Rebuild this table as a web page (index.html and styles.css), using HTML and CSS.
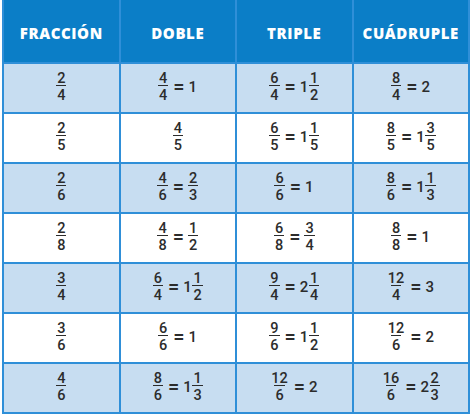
FILE: index.html
```html
<!DOCTYPE html>
<html lang="es">
<head>
<meta charset="utf-8">
<link rel="stylesheet" href="styles.css">
</head>
<body>
<div class="grid">
  <div class="th">FRACCIÓN</div>
  <div class="th">DOBLE</div>
  <div class="th">TRIPLE</div>
  <div class="th">CUÁDRUPLE</div>

  <div class="td alt"><span class="fr"><span>2</span><span>4</span></span></div>
  <div class="td alt"><span class="fr"><span>4</span><span>4</span></span><span class="eq">=</span><span class="n">1</span></div>
  <div class="td alt"><span class="fr"><span>6</span><span>4</span></span><span class="eq">=</span><span class="n">1</span><span class="fr"><span>1</span><span>2</span></span></div>
  <div class="td alt"><span class="fr"><span>8</span><span>4</span></span><span class="eq">=</span><span class="n">2</span></div>

  <div class="td"><span class="fr"><span>2</span><span>5</span></span></div>
  <div class="td"><span class="fr"><span>4</span><span>5</span></span></div>
  <div class="td"><span class="fr"><span>6</span><span>5</span></span><span class="eq">=</span><span class="n">1</span><span class="fr"><span>1</span><span>5</span></span></div>
  <div class="td"><span class="fr"><span>8</span><span>5</span></span><span class="eq">=</span><span class="n">1</span><span class="fr"><span>3</span><span>5</span></span></div>

  <div class="td alt"><span class="fr"><span>2</span><span>6</span></span></div>
  <div class="td alt"><span class="fr"><span>4</span><span>6</span></span><span class="eq">=</span><span class="fr"><span>2</span><span>3</span></span></div>
  <div class="td alt"><span class="fr"><span>6</span><span>6</span></span><span class="eq">=</span><span class="n">1</span></div>
  <div class="td alt"><span class="fr"><span>8</span><span>6</span></span><span class="eq">=</span><span class="n">1</span><span class="fr"><span>1</span><span>3</span></span></div>

  <div class="td"><span class="fr"><span>2</span><span>8</span></span></div>
  <div class="td"><span class="fr"><span>4</span><span>8</span></span><span class="eq">=</span><span class="fr"><span>1</span><span>2</span></span></div>
  <div class="td"><span class="fr"><span>6</span><span>8</span></span><span class="eq">=</span><span class="fr"><span>3</span><span>4</span></span></div>
  <div class="td"><span class="fr"><span>8</span><span>8</span></span><span class="eq">=</span><span class="n">1</span></div>

  <div class="td alt"><span class="fr"><span>3</span><span>4</span></span></div>
  <div class="td alt"><span class="fr"><span>6</span><span>4</span></span><span class="eq">=</span><span class="n">1</span><span class="fr"><span>1</span><span>2</span></span></div>
  <div class="td alt"><span class="fr"><span>9</span><span>4</span></span><span class="eq">=</span><span class="n">2</span><span class="fr"><span>1</span><span>4</span></span></div>
  <div class="td alt"><span class="fr"><span>12</span><span>4</span></span><span class="eq">=</span><span class="n">3</span></div>

  <div class="td"><span class="fr"><span>3</span><span>6</span></span></div>
  <div class="td"><span class="fr"><span>6</span><span>6</span></span><span class="eq">=</span><span class="n">1</span></div>
  <div class="td"><span class="fr"><span>9</span><span>6</span></span><span class="eq">=</span><span class="n">1</span><span class="fr"><span>1</span><span>2</span></span></div>
  <div class="td"><span class="fr"><span>12</span><span>6</span></span><span class="eq">=</span><span class="n">2</span></div>

  <div class="td alt"><span class="fr"><span>4</span><span>6</span></span></div>
  <div class="td alt"><span class="fr"><span>8</span><span>6</span></span><span class="eq">=</span><span class="n">1</span><span class="fr"><span>1</span><span>3</span></span></div>
  <div class="td alt"><span class="fr"><span>12</span><span>6</span></span><span class="eq">=</span><span class="n">2</span></div>
  <div class="td alt"><span class="fr"><span>16</span><span>6</span></span><span class="eq">=</span><span class="n">2</span><span class="fr"><span>2</span><span>3</span></span></div>
</div>
</body>
</html>
```

FILE: styles.css
```css
html, body {
  margin: 0;
  padding: 0;
  background: #ffffff;
}

.grid {
  margin-left: 2px;
  width: 468px;
  box-sizing: border-box;
  display: grid;
  grid-template-columns: repeat(4, 1fr);
  grid-template-rows: 62px repeat(7, 48px);
  gap: 2px;
  padding: 0 2px 2px 2px;
  background: #2f8fd8;
}

.th {
  background: #0b7ec7;
  color: #ffffff;
  font-family: "Open Sans", "DejaVu Sans", sans-serif;
  font-weight: 800;
  font-size: 15px;
  letter-spacing: 0.6px;
  display: flex;
  align-items: center;
  justify-content: center;
  padding-top: 3px;
}

.td {
  background: #ffffff;
  color: #2c2c2c;
  font-family: Roboto, "Liberation Sans", sans-serif;
  font-weight: 500;
  font-size: 14.5px;
  display: flex;
  align-items: center;
  justify-content: center;
  padding-bottom: 2px;
}

.td.alt {
  background: #c7ddf1;
}

.fr {
  display: inline-flex;
  flex-direction: column;
  align-items: center;
  line-height: 17px;
}

.fr span {
  display: block;
  padding: 0 1px;
}

.fr span:first-child {
  margin-bottom: -1px;
}

.fr span:last-child {
  border-top: 1.5px solid #2c2c2c;
  margin-top: -1px;
  padding-top: 1px;
}

.eq {
  font-size: 20px;
  font-weight: 500;
  margin: 0 4px 0 5px;
  line-height: 1;
}

.n {
  line-height: 1;
  font-size: 15px;
  margin-right: 0.5px;
}
```
